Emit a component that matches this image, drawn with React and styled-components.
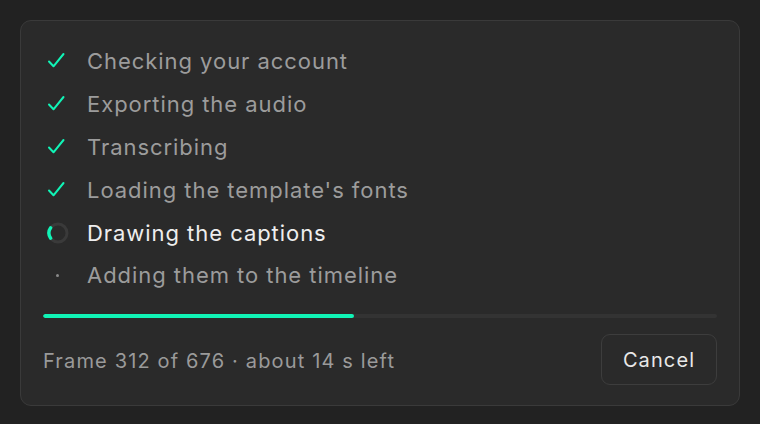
import React from 'react';
import styled, { createGlobalStyle } from 'styled-components';

const GlobalStyle = createGlobalStyle`
  html, body {
    margin: 0;
    padding: 0;
    background: #222222;
  }
  body {
    font-family: Inter, "Noto Sans", sans-serif;
    -webkit-font-smoothing: antialiased;
  }
`;

const ACCENT = '#10f4b6';

const steps = [
    { label: 'Checking your account', state: 'done' },
    { label: 'Exporting the audio', state: 'done' },
    { label: 'Transcribing', state: 'done' },
    { label: "Loading the template's fonts", state: 'done' },
    { label: 'Drawing the captions', state: 'active' },
    { label: 'Adding them to the timeline', state: 'pending' },
];

const CheckIcon = () => (
    <svg width="18" height="18" viewBox="0 0 18 18" fill="none">
        <path d="M2 9.5 L6.5 14.3 L16.5 2" stroke={ACCENT} strokeWidth="2" strokeLinecap="round" strokeLinejoin="round" />
    </svg>
);

// track ring with a short accent arc on the left side
const Spinner = () => (
    <svg width="24" height="24" viewBox="1 0 24 24" fill="none">
        <circle cx="12" cy="12" r="9" stroke="#3a3a3a" strokeWidth="3" />
        <path d="M4.63 17.16 A9 9 0 0 1 4.63 6.84" stroke={ACCENT} strokeWidth="3.4" strokeLinecap="round" />
    </svg>
);

const StepIcon = ({ state }) => {
    if (state === 'done') return <CheckIcon />;
    if (state === 'active') return <Spinner />;
    return <Dot />;
};

const Progress = ({ current, total }) => (
    <Track>
        <Fill style={{ width: `${(current / total) * 100}%` }} />
    </Track>
);

const App = () => {
    const current = 312;
    const total = 676;

    return (
        <Page>
            <GlobalStyle />
            <Card>
                <StepList>
                    {steps.map((step) => (
                        <Step key={step.label}>
                            <IconSlot>
                                <StepIcon state={step.state} />
                            </IconSlot>
                            <Label $active={step.state === 'active'}>{step.label}</Label>
                        </Step>
                    ))}
                </StepList>
                <Progress current={current} total={total} />
                <Footer>
                    <Status>{`Frame ${current} of ${total} · about 14 s left`}</Status>
                    <CancelButton type="button">Cancel</CancelButton>
                </Footer>
            </Card>
        </Page>
    );
};

const Page = styled.div`
    width: 760px;
    height: 424px;
    padding: 20px;
    box-sizing: border-box;
    background: #222222;
`;

const Card = styled.div`
    box-sizing: border-box;
    width: 720px;
    height: 386px;
    padding: 19px 22px 20px 22px;
    background: #2a2a2a;
    border: 1px solid #3a3a3a;
    border-radius: 11px;
    display: flex;
    flex-direction: column;
`;

const StepList = styled.ul`
    list-style: none;
    margin: 0;
    padding: 0;
    display: flex;
    flex-direction: column;
`;

const Step = styled.li`
    height: 42.8px;
    display: flex;
    align-items: center;
`;

const IconSlot = styled.span`
    width: 44px;
    display: flex;
    align-items: center;
    justify-content: flex-start;
    padding-left: 4px;
    box-sizing: border-box;
`;

const Dot = styled.span`
    display: block;
    width: 3px;
    height: 3px;
    margin-left: 9px;
    border-radius: 50%;
    background: #8a8a8a;
`;

const Label = styled.span`
    font-size: 22px;
    letter-spacing: 0.95px;
    color: ${(p) => (p.$active ? '#eeeeee' : '#9c9c9c')};
`;

const Track = styled.div`
    margin-top: 17px;
    height: 5px;
    border-radius: 3px;
    background: #333333;
    overflow: hidden;
`;

const Fill = styled.div`
    height: 100%;
    border-radius: 3px;
    background: ${ACCENT};
`;

const Footer = styled.div`
    margin-top: 16px;
    display: flex;
    align-items: center;
    justify-content: space-between;
`;

const Status = styled.span`
    font-size: 20px;
    letter-spacing: 1.15px;
    color: #9a9a9a;
    padding-top: 2px;
`;

const CancelButton = styled.button`
    box-sizing: border-box;
    width: 116px;
    height: 51px;
    background: #2a2a2a;
    border: 1px solid #3d3d3d;
    border-radius: 9px;
    color: #e8e8e8;
    font-family: Inter, "Noto Sans", sans-serif;
    font-size: 20px;
    letter-spacing: 1.1px;
    cursor: pointer;
`;

export default App;
